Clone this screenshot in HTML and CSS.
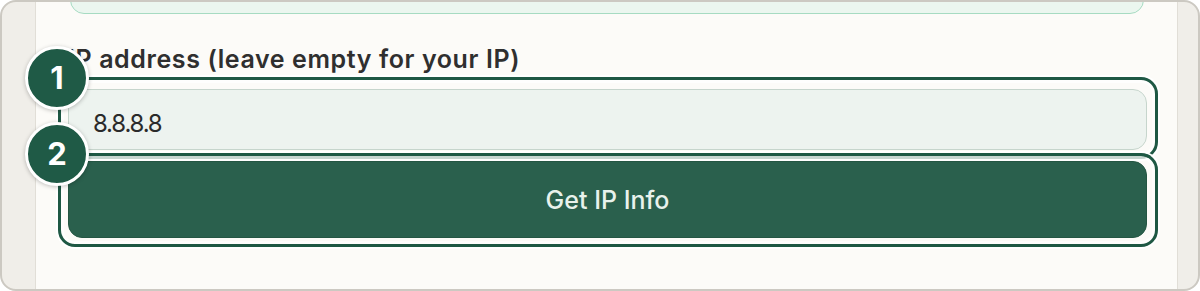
FILE: index.html
```html
<!DOCTYPE html>
<html lang="en">
<head>
  <meta charset="UTF-8" />
  <meta name="viewport" content="width=device-width, initial-scale=1.0"/>
  <title>IP Info</title>
  <link rel="stylesheet" href="styles.css">
</head>
<body>

  <div class="frame">
    <div class="side side-left"></div>

    <div class="main">
      <div class="result-box"></div>

      <label class="field-label" for="ip">IP address (leave empty for your IP)</label>

      <div class="marked">
        <input type="text" id="ip" class="ip-input" value="8.8.8.8" />
        <div class="ring"></div>
        <div class="badge">1</div>
      </div>

      <div class="marked marked-btn">
        <button class="get-btn">Get IP Info</button>
        <div class="ring"></div>
        <div class="badge">2</div>
      </div>
    </div>

    <div class="side side-right"></div>
  </div>

</body>
</html>
```

FILE: styles.css
```css
html, body {
  margin: 0;
  padding: 0;
  background: #ffffff;
}

body {
  width: 1200px;
  height: 291px;
  overflow: hidden;
  font-family: "Inter", "Noto Sans", sans-serif;
}

.frame {
  box-sizing: border-box;
  height: 291px;
  display: flex;
  border: 2px solid #ccc9c2;
  border-radius: 16px;
  overflow: hidden;
  background: #f0eee9;
}

.side-left {
  width: 33px;
  border-right: 1px solid #e1ded7;
}

.side-right {
  width: 20px;
  border-left: 1px solid #e1ded7;
}

.main {
  flex: 1;
  background: #fcfbf8;
  padding: 0 30px 0 32px;
  display: flex;
  flex-direction: column;
}

.result-box {
  height: 50px;
  margin: -40px 3px 0 2px;
  background: #ebf6ef;
  border: 1.5px solid #a6dbc2;
  border-radius: 14px;
}

.field-label {
  margin-top: 30px;
  font-size: 25px;
  line-height: 30px;
  font-weight: 600;
  letter-spacing: 0.6px;
  color: #2f2f2f;
}

.marked {
  position: relative;
  margin-top: 15px;
}

.marked-btn {
  margin-top: 11px;
}

.ip-input {
  box-sizing: border-box;
  display: block;
  width: 100%;
  height: 61px;
  padding: 8px 24px 0;
  font-family: "Inter", "Noto Sans", sans-serif;
  font-size: 24px;
  font-weight: 400;
  letter-spacing: -1.2px;
  color: #2a2a2a;
  background: #edf3ef;
  border: 1px solid #c6d5cc;
  border-radius: 14px;
  outline: none;
}

.get-btn {
  display: block;
  width: 100%;
  height: 77px;
  font-family: "Inter", "Noto Sans", sans-serif;
  font-size: 25px;
  font-weight: 500;
  color: #e8f2ec;
  background: #2a604d;
  border: 1px solid #245643;
  border-radius: 14px;
  cursor: pointer;
}

/* annotation overlays */
.ring {
  position: absolute;
  top: -12px;
  left: -10px;
  right: -11px;
  bottom: -9px;
  border: 3px solid #1e5844;
  border-radius: 17px;
  box-shadow: inset 0 0 0 3px rgba(255, 255, 255, 0.75), 0 0 0 2px #ffffff;
  pointer-events: none;
}

.marked-btn .ring {
  top: -8px;
  bottom: -9px;
}

.badge {
  position: absolute;
  top: -43px;
  left: -43px;
  width: 58px;
  height: 58px;
  border: 3px solid #ffffff;
  border-radius: 50%;
  background: #1f5a46;
  color: #ffffff;
  font-size: 31px;
  font-weight: 700;
  line-height: 58px;
  text-align: center;
  box-shadow: 0 1px 4px rgba(0, 0, 0, 0.25);
}

.marked-btn .badge {
  top: -39px;
}
```
